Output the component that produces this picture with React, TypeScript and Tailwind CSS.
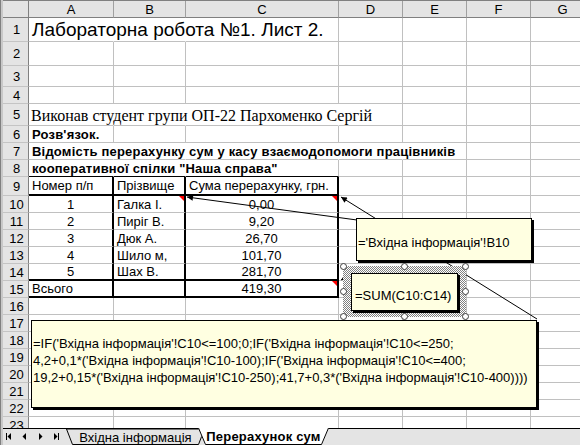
import React from 'react';

type CellSpec = { t?: React.ReactNode; cls?: string; r?: string; b?: string; tri?: boolean };
type RowSpec = { label: string; h: string; cells: CellSpec[] };

const COLS = ['w-[85px]', 'w-[72px]', 'w-[153px]', 'w-[64px]', 'w-[64px]', 'w-[64px]', 'w-[64px]'];
const LETTERS = ['A', 'B', 'C', 'D', 'E', 'F', 'G'];

const HID = 'border-r border-r-transparent';
const TR = 'border-r-2 border-r-black';
const TB = 'border-b-2 border-b-black';
const BB = 'border-b border-b-black';

const dataRows: [string, string, string][] = [
  ['1', 'Галка І.', '0,00'],
  ['2', 'Пиріг В.', '9,20'],
  ['3', 'Дюк А.', '26,70'],
  ['4', 'Шило м,', '101,70'],
  ['5', 'Шах В.', '281,70'],
];

const rows: RowSpec[] = [
  {
    label: '1',
    h: 'h-[24px]',
    cells: [
      { t: 'Лабораторна робота №1. Лист 2.', cls: 'text-[19px] pl-[3px] items-end pb-[2px]', r: HID },
      { r: HID },
    ],
  },
  { label: '2', h: 'h-[24px]', cells: [] },
  { label: '3', h: 'h-[21px]', cells: [] },
  { label: '4', h: 'h-[17px]', cells: [] },
  {
    label: '5',
    h: 'h-[22px]',
    cells: [
      {
        t: 'Виконав студент групи ОП-22 Пархоменко Сергій',
        cls: "font-['Liberation_Serif'] text-[16px] pl-[2px] items-end pb-[1px]",
        r: HID,
      },
      { r: HID },
      { r: HID },
    ],
  },
  { label: '6', h: 'h-[17px]', cells: [{ t: "Розв'язок.", cls: 'font-bold tracking-[0.2px] pl-[3px]' }] },
  {
    label: '7',
    h: 'h-[17px]',
    cells: [
      {
        t: 'Відомість перерахунку сум у касу взаємодопомоги працівників',
        cls: 'font-bold tracking-[0.2px] pl-[3px]',
        r: HID,
      },
      { r: HID },
      { r: HID },
      { r: HID },
    ],
  },
  {
    label: '8',
    h: 'h-[17px]',
    cells: [
      { t: 'кооперативної спілки "Наша справа"', cls: 'font-bold tracking-[0.2px] pl-[3px]', r: HID, b: BB },
      { r: HID, b: BB },
      { b: BB },
    ],
  },
  {
    label: '9',
    h: 'h-[19px]',
    cells: [
      { t: 'Номер п/п', cls: 'pl-[3px]', r: TR, b: TB },
      { t: 'Прізвище', cls: 'pl-[3px]', r: TR, b: TB },
      { t: 'Сума перерахунку, грн.', cls: 'pl-[3px]', r: TR, b: TB },
    ],
  },
  ...dataRows.map(([n, name, sum], i) => ({
    label: String(10 + i),
    h: 'h-[17px]',
    cells: [
      { t: n, cls: 'justify-center', r: TR, b: i === 4 ? TB : undefined },
      { t: name, cls: 'pl-[3px]', r: TR, b: i === 4 ? TB : undefined, tri: i === 0 },
      { t: sum, cls: 'justify-center', r: TR, b: i === 4 ? TB : undefined, tri: i === 0 },
    ],
  })),
  {
    label: '15',
    h: 'h-[17px]',
    cells: [
      { t: 'Всього', cls: 'pl-[3px]', r: TR, b: TB },
      { r: TR, b: TB },
      { t: '419,30', cls: 'justify-center', r: TR, b: TB, tri: true },
    ],
  },
  ...['16', '17', '18', '19', '20', '21', '22', '23'].map((l) => ({ label: l, h: 'h-[17px]', cells: [] })),
];

function Row({ spec }: { spec: RowSpec }) {
  return (
    <div className={`flex shrink-0 ${spec.h}`}>
      <div className="w-[26px] shrink-0 h-full bg-[#e4e4e4] border-r border-r-[#808080] border-b border-b-[#c4c4c4] flex items-center justify-center pl-[2px]">
        {spec.label}
      </div>
      {COLS.map((w, i) => {
        const c = spec.cells[i] ?? {};
        const r = c.r ?? 'border-r border-r-[#c0c0c0]';
        const b = c.b ?? 'border-b border-b-[#c0c0c0]';
        return (
          <div
            key={i}
            className={`${w} shrink-0 h-full flex items-center whitespace-nowrap ${r} ${b} ${c.tri ? 'relative' : ''} ${c.cls ?? ''}`}
          >
            {c.t}
            {c.tri && (
              <span className="absolute top-0 right-0 w-0 h-0 border-t-[5px] border-t-[#ff0000] border-l-[5px] border-l-transparent" />
            )}
          </div>
        );
      })}
    </div>
  );
}

function Handle({ cls }: { cls: string }) {
  return <span className={`absolute w-[7px] h-[7px] rounded-full bg-white border border-[#404040] ${cls}`} />;
}

export default function App() {
  return (
    <div className="relative w-[580px] h-[445px] overflow-hidden bg-white flex font-['Liberation_Sans',Arial,sans-serif] text-[13px] text-black leading-none">
      {/* left frame */}
      <div className="w-[3px] shrink-0 h-full bg-[#c8c8c8] border-l border-l-[#808080]" />

      <div className="flex-1 flex flex-col min-w-0">
        {/* sheet */}
        <div className="h-[428px] overflow-hidden flex flex-col shrink-0">
          {/* column headers */}
          <div className="flex h-[18px] shrink-0 border-t border-t-[#808080]">
            <div className="w-[26px] shrink-0 h-full bg-[#e4e4e4] border-r border-r-[#808080] border-b border-b-[#808080]" />
            {COLS.map((w, i) => (
              <div
                key={i}
                className={`${w} shrink-0 h-full bg-[#e4e4e4] border-r border-r-[#a0a0a0] border-b border-b-[#808080] flex items-center justify-center`}
              >
                {LETTERS[i]}
              </div>
            ))}
          </div>
          {rows.map((r) => (
            <Row key={r.label} spec={r} />
          ))}
        </div>

        {/* sheet tabs */}
        <div className="h-[17px] shrink-0 flex bg-[#e4e4e4] border-t border-t-black">
          <div className="w-[63px] shrink-0 h-full flex items-center">
            <svg width="63" height="16" viewBox="0 0 63 16">
              <rect x="3" y="4" width="1" height="7" fill="#000" />
              <path d="M8 4 L8 11 L4.5 7.5 Z" fill="#000" />
              <path d="M23 4 L23 11 L19.5 7.5 Z" fill="#000" />
              <path d="M36 4 L36 11 L39.5 7.5 Z" fill="#000" />
              <path d="M51 4 L51 11 L54.5 7.5 Z" fill="#000" />
              <rect x="55" y="4" width="1" height="7" fill="#000" />
            </svg>
          </div>
          <div className="relative w-[139px] h-full shrink-0 flex items-center justify-center">
            <svg className="absolute inset-0" width="139" height="16" viewBox="0 0 139 16">
              <polygon points="0.5,0 6.5,15.5 132.5,15.5 138.5,0" fill="#e4e4e4" stroke="#000" strokeWidth="1" />
            </svg>
            <span className="relative">Вхідна інформація</span>
          </div>
          <div className="relative w-[131px] h-[17px] -mt-[1px] -ml-[7px] shrink-0 flex items-center justify-center">
            <svg className="absolute inset-0" width="131" height="17" viewBox="0 0 131 17">
              <polygon points="0,0 7,16.5 124,16.5 131,0" fill="#fff" />
              <polyline points="0.5,0 7.5,16.5 123.5,16.5 130.5,0" fill="none" stroke="#000" strokeWidth="1" />
            </svg>
            <span className="relative font-bold tracking-[0.2px]">Перерахунок сум</span>
          </div>
        </div>
      </div>

      {/* arrows */}
      <svg className="absolute left-0 top-0 pointer-events-none" width="580" height="428" viewBox="0 0 580 428">
        <defs>
          <marker id="ah" viewBox="0 0 10 10" refX="10" refY="5" markerWidth="8" markerHeight="6" markerUnits="userSpaceOnUse" orient="auto-start-reverse">
            <path d="M0 0 L10 5 L0 10 Z" fill="#000" />
          </marker>
        </defs>
        <line x1="187" y1="197" x2="357" y2="220" stroke="#000" strokeWidth="1" markerStart="url(#ah)" />
        <line x1="341" y1="197" x2="537" y2="319" stroke="#000" strokeWidth="1" markerStart="url(#ah)" />
        <line x1="341" y1="280" x2="352" y2="274" stroke="#000" strokeWidth="1" markerStart="url(#ah)" />
      </svg>

      {/* comment B10 */}
      <div className="absolute left-[356px] top-[218px] w-[176px] h-[43px] bg-[#ffffe1] border border-black shadow-[2px_2px_0_#000] flex items-center pl-[1px] pt-[5px] whitespace-nowrap">
        ='Вхідна інформація'!B10
      </div>

      {/* selected comment C15 */}
      <div className="absolute left-[343px] top-[266px] w-[123px] h-[51px] bg-[repeating-conic-gradient(#808080_0_25%,#ffffff_0_50%)] bg-[length:2px_2px]">
        <Handle cls="-left-[3px] -top-[3px]" />
        <Handle cls="left-[58px] -top-[3px]" />
        <Handle cls="-right-[3px] -top-[3px]" />
        <Handle cls="-left-[3px] top-[22px]" />
        <Handle cls="-right-[3px] top-[22px]" />
        <Handle cls="-left-[3px] -bottom-[3px]" />
        <Handle cls="left-[58px] -bottom-[3px]" />
        <Handle cls="-right-[3px] -bottom-[3px]" />
      </div>
      <div className="absolute left-[351px] top-[273px] w-[107px] h-[38px] bg-[#ffffe1] border border-black shadow-[2px_2px_0_#000] flex items-center pl-[3px] pt-[6px] whitespace-nowrap">
        =SUM(C10:C14)
      </div>

      {/* comment C10 */}
      <div className="absolute left-[31px] top-[320px] w-[506px] h-[88px] bg-[#ffffe1] border border-black shadow-[2px_2px_0_#000] pl-[1px] pt-[14px] leading-[17px] whitespace-nowrap">
        <div>=IF('Вхідна інформація'!C10&lt;=100;0;IF('Вхідна інформація'!C10&lt;=250;</div>
        <div>4,2+0,1*('Вхідна інформація'!C10-100);IF('Вхідна інформація'!C10&lt;=400;</div>
        <div>19,2+0,15*('Вхідна інформація'!C10-250);41,7+0,3*('Вхідна інформація'!C10-400))))</div>
      </div>
    </div>
  );
}
